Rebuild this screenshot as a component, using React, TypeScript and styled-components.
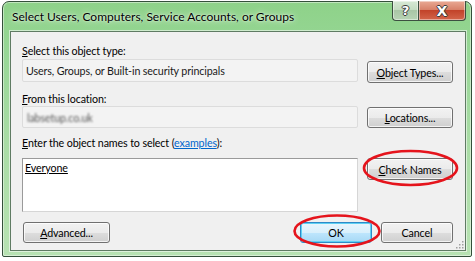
import React from "react";
import styled, { createGlobalStyle } from "styled-components";

const UI = `Lato, "Open Sans", "Liberation Sans", sans-serif`;
const BODY_SIZE = "10.7px";
const BODY_TRACK = "-0.12px";

const Global = createGlobalStyle`
  html, body { margin: 0; padding: 0; background: #ffffff; }
  body { width: 475px; height: 261px; overflow: hidden; font-family: ${UI}; }
`;

const Stage = styled.div`
  position: relative;
  width: 475px;
  height: 261px;
  padding: 1px 0 0 2px;
  box-sizing: border-box;
`;

const Win = styled.div`
  width: 470px;
  height: 256px;
  box-sizing: border-box;
  border: 1px solid #34503a;
  border-radius: 7px 7px 2px 2px;
  background: linear-gradient(180deg, #8ed289 0%, #98d797 22%, #a9dca5 55%, #b7e2b2 100%);
  box-shadow: inset 0 0 0 1px rgba(255, 255, 255, 0.45);
  display: flex;
  flex-direction: column;
  padding: 0 5px 5px 7px;
`;

const TitleBar = styled.div`
  height: 29px;
  display: flex;
  align-items: flex-start;
  flex-shrink: 0;
`;

const Title = styled.div`
  flex: 1;
  padding: 7px 0 0 2px;
  font-size: 12px;
  line-height: 16px;
  color: #000;
  text-shadow: 0 0 6px rgba(255, 255, 255, 0.9), 0 0 2px rgba(255, 255, 255, 0.8);
  white-space: nowrap;
`;

const CapButtons = styled.div`
  display: flex;
  margin-top: -1px;
`;

const CapButton = styled.div<{ $kind: "help" | "close" }>`
  height: 20px;
  width: ${(p) => (p.$kind === "help" ? "26px" : "48px")};
  box-sizing: border-box;
  border: 1px solid #3c4f40;
  border-top: none;
  ${(p) => (p.$kind === "help" ? "border-right: none;" : "")}
  border-radius: ${(p) => (p.$kind === "help" ? "0 0 0 4px" : "0 0 4px 0")};
  background: ${(p) =>
    p.$kind === "help"
      ? "linear-gradient(180deg, #d7e8d5 0%, #c5dcc2 45%, #a9c6a6 50%, #b8d4b5 100%)"
      : "linear-gradient(180deg, #e9a994 0%, #d8826a 45%, #c2432a 50%, #d3654a 100%)"};
  box-shadow: inset 0 0 0 1px rgba(255, 255, 255, 0.45);
  display: flex;
  align-items: center;
  justify-content: center;
  color: #fff;
  font-family: "DejaVu Sans", sans-serif;
  font-weight: bold;
  font-size: ${(p) => (p.$kind === "help" ? "13px" : "14px")};
  text-shadow: -1px 0 #3a3a3a, 1px 0 #3a3a3a, 0 -1px #3a3a3a, 0 1px #3a3a3a;
`;

const Client = styled.div`
  position: relative;
  flex: 1;
  background: #f0f0f0;
  border: 1px solid #5f7b63;
  box-shadow: 0 0 0 1px rgba(255, 255, 255, 0.55);
  padding: 11px 12px 0 11px;
  display: flex;
  flex-direction: column;
  font-size: ${BODY_SIZE};
  letter-spacing: ${BODY_TRACK};
`;

const Label = styled.div<{ $mt?: number }>`
  height: 15px;
  margin-top: ${(p) => p.$mt ?? 0}px;
  line-height: 15px;
  color: #000;
  white-space: nowrap;
`;

const Key = styled.span`
  text-decoration: underline;
`;

const Link = styled.span`
  color: #0066cc;
  text-decoration: underline;
`;

const Row = styled.div<{ $mt?: number }>`
  display: grid;
  grid-template-columns: 336px 86px;
  column-gap: 9px;
  align-items: end;
  margin-top: ${(p) => p.$mt ?? 0}px;
`;

const TopRow = styled(Row)`
  align-items: start;
`;

const ReadBox = styled.div<{ $h: number }>`
  height: ${(p) => p.$h}px;
  box-sizing: border-box;
  border: 1px solid #dcdcdc;
  border-radius: 2px;
  background: #f3f3f3;
  padding: 0 3px;
  display: flex;
  align-items: center;
  color: #1a1a1a;
  white-space: nowrap;
`;

const Blurred = styled.span`
  color: #555;
  filter: blur(1.3px);
  margin-left: 1px;
`;

const NamesBox = styled.div`
  height: 54px;
  box-sizing: border-box;
  background: #fff;
  border: 1px solid #9a9a9a;
  border-right-color: #d6d6d6;
  border-bottom-color: #d6d6d6;
  padding: 2px 2px;
  line-height: 14px;
`;

const Name = styled.span`
  text-decoration: underline;
  color: #000;
`;

const Button = styled.div<{ $w?: number; $h?: number; $default?: boolean }>`
  width: ${(p) => p.$w ?? 86}px;
  height: ${(p) => p.$h ?? 22}px;
  box-sizing: border-box;
  border: 1px solid ${(p) => (p.$default ? "#2d8ac8" : "#707070")};
  border-radius: 3px;
  background: ${(p) =>
    p.$default
      ? "linear-gradient(180deg, #eaf6fd 0%, #d9f0fc 50%, #bee6fd 51%, #a7d9f5 100%)"
      : "linear-gradient(180deg, #f2f2f2 0%, #ebebeb 50%, #dddddd 51%, #cfcfcf 100%)"};
  box-shadow: ${(p) =>
    p.$default
      ? "inset 0 0 0 1px #5fd0f3"
      : "inset 0 0 0 1px rgba(255,255,255,0.75)"};
  display: flex;
  align-items: center;
  justify-content: center;
  color: #000;
  white-space: nowrap;
`;

const BottomRow = styled.div`
  margin-top: 10px;
  display: flex;
  align-items: center;
  padding-left: 1px;
`;

const Spacer = styled.div`
  flex: 1;
`;

const DialogButtons = styled.div`
  display: flex;
  gap: 9px;
`;

const Grip = styled.svg`
  position: absolute;
  right: 1px;
  bottom: 1px;
`;

const Annotations = styled.svg`
  position: absolute;
  left: 0;
  top: 0;
  pointer-events: none;
`;

export default function App() {
  return (
    <>
      <Global />
      <Stage>
        <Win>
          <TitleBar>
            <Title>Select Users, Computers, Service Accounts, or Groups</Title>
            <CapButtons>
              <CapButton $kind="help">?</CapButton>
              <CapButton $kind="close">X</CapButton>
            </CapButtons>
          </TitleBar>
          <Client>
            <Label>
              <Key>S</Key>elect this object type:
            </Label>
            <TopRow $mt={1}>
              <ReadBox $h={23}>Users, Groups, or Built-in security principals</ReadBox>
              <Button style={{ marginTop: 2 }}>
                <span>
                  <Key>O</Key>bject Types...
                </span>
              </Button>
            </TopRow>
            <Label $mt={8}>
              <Key>F</Key>rom this location:
            </Label>
            <Row>
              <ReadBox $h={22}>
                <Blurred>labsetup.co.uk</Blurred>
              </ReadBox>
              <Button $h={21}>
                <span>
                  <Key>L</Key>ocations...
                </span>
              </Button>
            </Row>
            <Label $mt={7}>
              <Key>E</Key>nter the object names to select (<Link>examples</Link>):
            </Label>
            <TopRow $mt={8}>
              <NamesBox>
                <Name>Everyone</Name>
              </NamesBox>
              <Button>
                <span>
                  <Key>C</Key>heck Names
                </span>
              </Button>
            </TopRow>
            <BottomRow>
              <Button $w={87} $h={21}>
                <span>
                  <Key>A</Key>dvanced...
                </span>
              </Button>
              <Spacer />
              <DialogButtons>
                <Button $w={72} $h={21} $default>
                  OK
                </Button>
                <Button $w={72} $h={21}>
                  Cancel
                </Button>
              </DialogButtons>
            </BottomRow>
            <Grip width="10" height="10" viewBox="0 0 10 10">
              {[
                [8, 2],
                [8, 5],
                [5, 5],
                [8, 8],
                [5, 8],
                [2, 8],
              ].map(([x, y]) => (
                <rect key={`${x}-${y}`} x={x} y={y} width="1.5" height="1.5" fill="#a0a0a0" />
              ))}
            </Grip>
          </Client>
        </Win>
        <Annotations width="475" height="261" viewBox="0 0 475 261">
          <ellipse cx="410.5" cy="168" rx="46.5" ry="17" fill="none" stroke="#e5141c" strokeWidth="2.6" />
          <ellipse cx="337" cy="231" rx="42.5" ry="15.5" fill="none" stroke="#e5141c" strokeWidth="2.6" />
        </Annotations>
      </Stage>
    </>
  );
}
